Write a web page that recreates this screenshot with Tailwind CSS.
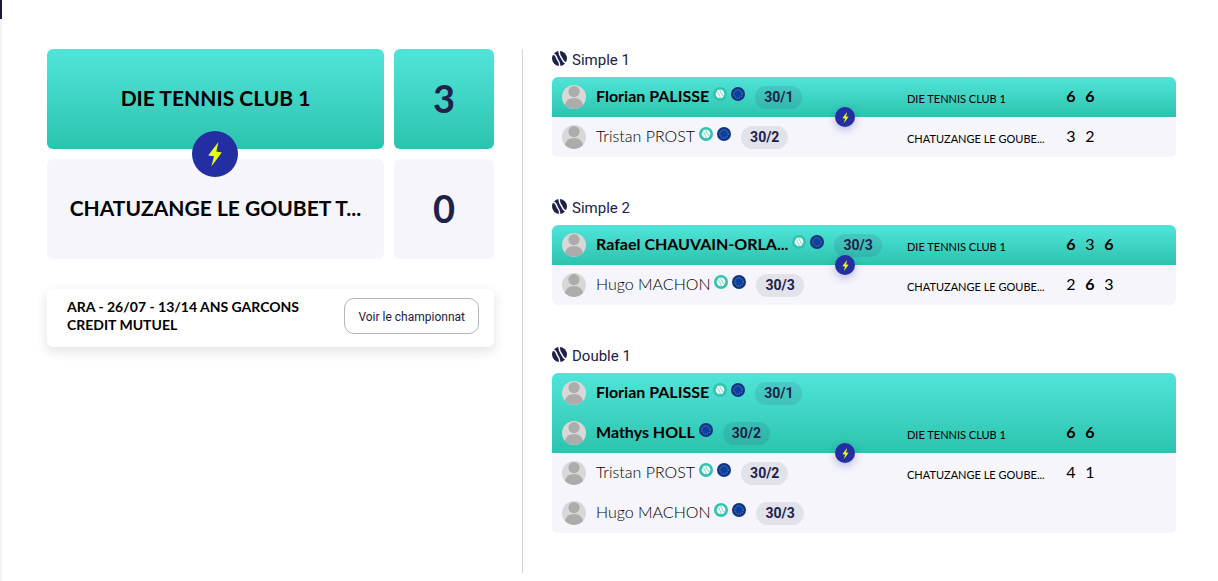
<!DOCTYPE html>
<html lang="fr">
  <head>
    <meta charset="UTF-8" />
    <meta name="viewport" content="width=device-width, initial-scale=1.0" />
    <title>DIE TENNIS CLUB 1 - CHATUZANGE LE GOUBET T.C.</title>
    <script src="https://cdn.jsdelivr.net/npm/@tailwindcss/browser@4"></script>
  </head>

  <body class="bg-white text-black font-['Lato','Open_Sans',sans-serif]">
    <!-- Shared icons -->
    <svg class="hidden">
      <symbol id="icon-bolt" viewBox="0 0 14 24">
        <path d="M10.4 0 0.2 13.4 6 14.2 3.4 24.4 13.8 10.6 8.4 9.6z" fill="#eaff0d" />
      </symbol>
      <symbol id="icon-ball" viewBox="0 0 16 16">
        <circle cx="8" cy="8" r="8" fill="#20214a" />
        <path d="M1 3.2C5 3.6 4.4 7.4 6 9.4S8.6 12.6 8 16.4M7.8 -0.4C7.2 3.6 8.6 5.4 10 7.2S11.4 12.4 15.2 13" fill="none" stroke="#fff" stroke-width="1.6" />
      </symbol>
      <symbol id="icon-tennis" viewBox="0 0 14 14">
        <circle cx="7" cy="7" r="7" fill="#2dc4b0" />
        <circle cx="7" cy="6.8" r="4.4" fill="#fff" />
        <path d="M3 4.6C5.4 4.6 5 6.4 6 7.6S7.2 9.4 7 11.4M7 2.4C6.8 4.4 7.4 5.2 8.2 6.2S8.8 9 11 9.2" fill="none" stroke="#2dc4b0" stroke-width="0.7" />
      </symbol>
      <symbol id="icon-europe" viewBox="0 0 14 14">
        <circle cx="7" cy="7" r="7" fill="#0c3488" />
        <circle cx="7" cy="7" r="4.2" fill="#0a3fa5" stroke="#a5a478" stroke-width="0.8" stroke-dasharray="1.2 1" />
      </symbol>
      <symbol id="icon-avatar" viewBox="0 0 24 24">
        <rect width="24" height="24" fill="#d8d8d8" />
        <circle cx="12" cy="6.6" r="5.6" fill="#acacac" />
        <path d="M2.8 20.2Q4.4 13 12 13T21.2 20.2Q17.4 24 12 24T2.8 20.2z" fill="#acacac" />
      </symbol>
    </svg>

    <div class="flex min-h-screen">
      <!-- Side strip -->
      <div class="w-[2px] shrink-0 bg-[#f3f3f5]">
        <div class="h-[19px] bg-[#1d1740]"></div>
      </div>

      <main class="grid flex-1 grid-cols-[475fr_654fr] items-start pt-[49px] pb-2 pl-[45px] pr-[42px]">
        <!-- Teams -->
        <section class="pr-7">
          <div class="relative flex flex-col gap-[10px]">
            <div class="flex gap-[10px] font-bold">
              <div class="flex h-[100px] flex-1 items-center justify-center rounded-md bg-linear-to-b from-[#50e5d9] to-[#2bc3ae] pb-[2px] text-[21px]">DIE TENNIS CLUB 1</div>
              <div class="flex h-[100px] w-[100px] items-center justify-center rounded-md bg-linear-to-b from-[#50e5d9] to-[#2bc3ae] pb-[2px] text-[38px] text-[#20214a]">3</div>
            </div>
            <div class="flex gap-[10px] font-bold">
              <div class="flex h-[100px] flex-1 items-center justify-center rounded-md bg-[#f6f5fc] pb-[2px] text-[21px]">CHATUZANGE LE GOUBET T...</div>
              <div class="flex h-[100px] w-[100px] items-center justify-center rounded-md bg-[#f6f5fc] pb-[2px] text-[38px] text-[#20214a]">0</div>
            </div>
            <div class="pointer-events-none absolute inset-y-0 left-0 right-[111px] flex items-center justify-center">
              <span class="flex size-[46px] items-center justify-center rounded-full bg-[#222ea2]">
                <svg class="h-6 w-[14px]"><use href="#icon-bolt" /></svg>
              </span>
            </div>
          </div>

          <!-- Championship -->
          <div class="mt-[30px] flex items-start justify-between rounded-md bg-white pt-[9px] pr-[15px] pb-[13px] pl-5 shadow-[0_4px_12px_rgba(32,33,90,0.14)]">
            <p class="text-[14px] leading-[18px] font-bold">ARA - 26/07 - 13/14 ANS GARCONS<br />CREDIT MUTUEL</p>
            <button type="button" class="h-9 shrink-0 cursor-pointer rounded-[10px] border border-[#b5b5bd] px-[13px] pt-[2px] font-[Roboto,sans-serif] text-[12px] text-[#20214a]">Voir le championnat</button>
          </div>
        </section>

        <!-- Matches -->
        <section id="matches" class="border-l border-[#d4d4d8] pl-[29px]"></section>
      </main>
    </div>

    <script>
      const florian = { name: "Florian PALISSE", rank: "30/1", badges: ["tennis", "europe"] };
      const tristan = { name: "Tristan PROST", rank: "30/2", badges: ["tennis", "europe"] };
      const hugo = { name: "Hugo MACHON", rank: "30/3", badges: ["tennis", "europe"] };
      const mathys = { name: "Mathys HOLL", rank: "30/2", badges: ["europe"] };
      const rafael = { name: "Rafael CHAUVAIN-ORLA...", rank: "30/3", badges: ["tennis", "europe"] };

      const matches = [
        { title: "Simple 1", winners: [florian], losers: [tristan], sets: [[6, 3], [6, 2]] },
        { title: "Simple 2", winners: [rafael], losers: [hugo], sets: [[6, 2], [3, 6], [6, 3]] },
        { title: "Double 1", winners: [florian, mathys], losers: [tristan, hugo], sets: [[6, 4], [6, 1]] },
      ];

      function playerRow(player, won) {
        const badges = player.badges
          .map(badge => `<svg class="size-[14px]"><use href="#icon-${badge}" /></svg>`)
          .join("");
        return `<div class="flex h-10 items-center">
          <svg class="size-6 shrink-0 rounded-full"><use href="#icon-avatar" /></svg>
          <span class="ml-[10px] pb-[2px] whitespace-nowrap text-[16px] ${won ? "font-bold" : "font-light"}">${player.name}</span>
          <span class="ml-1 flex gap-1 pb-[6px]">${badges}</span>
          <span class="ml-[10px] rounded-full px-[9px] text-[14px] leading-[23px] font-bold font-[Roboto,sans-serif] text-[#20214a] ${won ? "bg-[#20214a]/10" : "bg-[#e2e2ea]"}">${player.rank}</span>
        </div>`;
      }

      function side(players, club, sets, index) {
        const won = index === 0;
        const scores = sets
          .map(set => `<span class="w-[10px] text-center ${set[index] > set[1 - index] ? "font-bold" : ""}">${set[index]}</span>`)
          .join("");
        return `<div class="grid grid-cols-[355fr_159fr_110fr] ${won ? "items-end rounded-t-md bg-linear-to-b from-[#50e5d9] to-[#2bc3ae]" : "items-start rounded-b-md bg-[#f6f5fc]"}">
          <div class="min-w-0 pl-[10px]">${players.map(player => playerRow(player, won)).join("")}</div>
          <div class="whitespace-nowrap pt-1 text-[11px] leading-9">${club}</div>
          <div class="flex h-10 items-center gap-[9px] pb-[2px] text-[16px]">${scores}</div>
        </div>`;
      }

      document.getElementById("matches").innerHTML = matches
        .map(match => `<article class="mb-10">
          <h2 class="flex h-7 items-start gap-[5px] font-[Roboto,sans-serif] text-[15px] leading-[22px] text-[#20214a]">
            <svg class="mt-[2px] size-[15px]"><use href="#icon-ball" /></svg>
            ${match.title}
          </h2>
          <div class="relative">
            ${side(match.winners, "DIE TENNIS CLUB 1", match.sets, 0)}
            ${side(match.losers, "CHATUZANGE LE GOUBE...", match.sets, 1)}
            <span class="absolute top-1/2 left-[47%] flex size-5 -translate-1/2 items-center justify-center rounded-full bg-[#222ea2] shadow-[0_3px_8px_rgba(34,46,162,0.3)]">
              <svg class="h-[11px] w-[7px]"><use href="#icon-bolt" /></svg>
            </span>
          </div>
        </article>`)
        .join("");
    </script>
  </body>
</html>
